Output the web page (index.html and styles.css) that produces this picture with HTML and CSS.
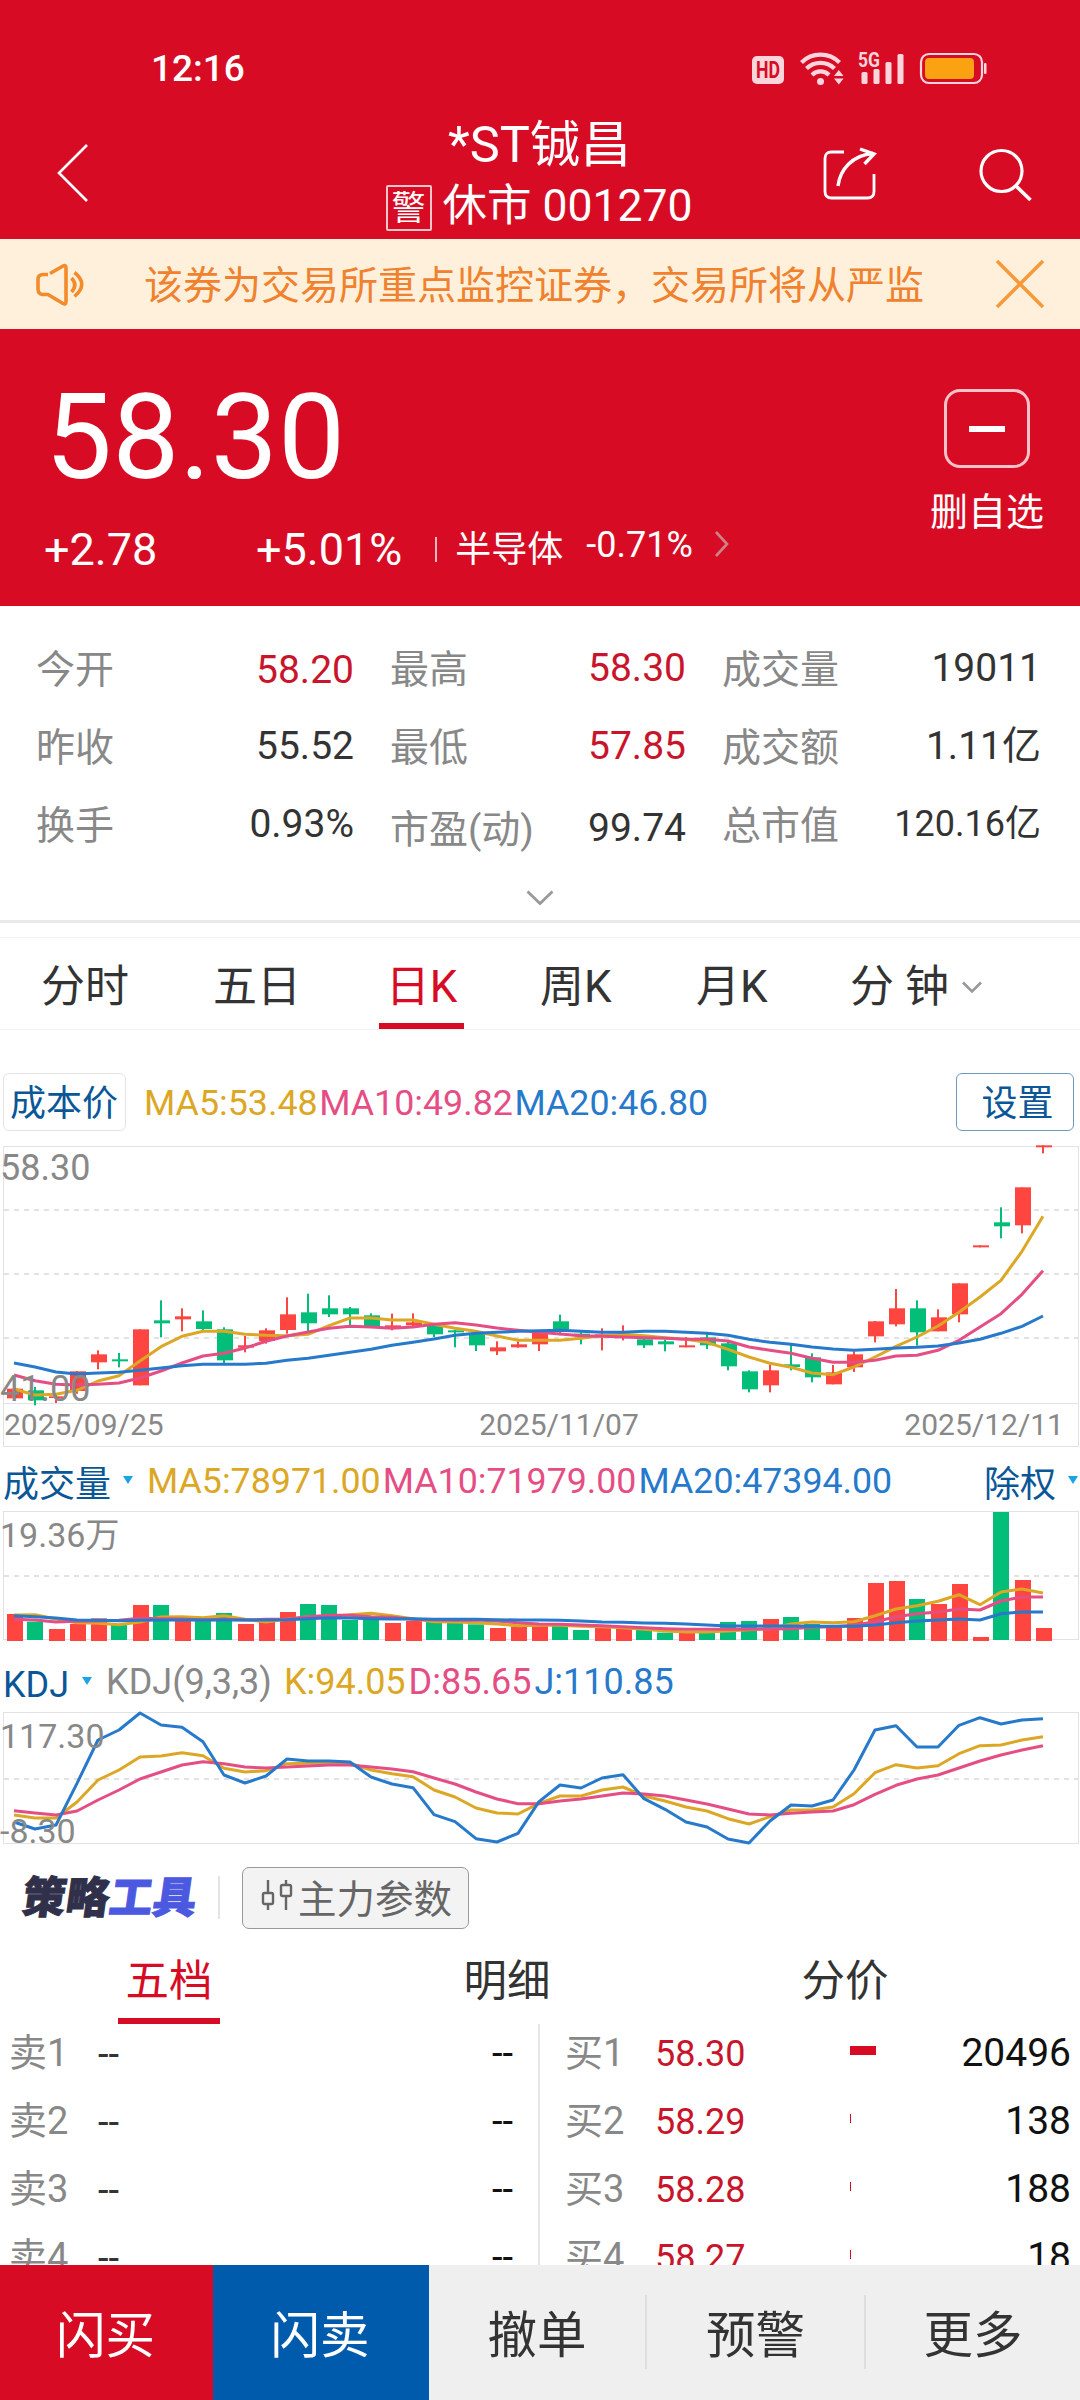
FILE: index.html
```html
<!DOCTYPE html>
<html lang="zh-CN">
<head>
    <meta charset="UTF-8">
    <meta name="viewport" content="width=device-width, initial-scale=1.0">
    <title>*ST铖昌 001270</title>
    <link rel="stylesheet" href="styles.css">
</head>
<body>

    <!-- Status bar and title -->
    <header class="header">
        <div class="status-bar">
            <span class="time">12:16</span>
            <svg class="status-icons" width="240" height="40" viewBox="0 0 240 40">
                <rect x="2" y="6" width="32" height="28" rx="5" fill="#fbd5dc"/>
                <text x="18" y="28" class="hd-text" text-anchor="middle" textLength="24" lengthAdjust="spacingAndGlyphs">HD</text>
                <g fill="none" stroke="#fbd5dc" stroke-width="4.2">
                    <path d="M51.500 12.500A27 27 0 0 1 89.500 12.500"/>
                    <path d="M56.500 18.500A20 20 0 0 1 84.500 18.500"/>
                    <path d="M62 25A12 12 0 0 1 79 25"/>
                </g>
                <circle cx="70.500" cy="31.500" r="3.500" fill="#fbd5dc"/>
                <path d="M84 26l4.800-6 4.800 6zM84 28.500h9.600l-4.800 6z" fill="#fbd5dc"/>
                <text x="108" y="17" class="net-text" textLength="22" lengthAdjust="spacingAndGlyphs">5G</text>
                <g fill="#fbd5dc">
                    <rect x="111.500" y="22" width="6" height="12" rx="1.500"/>
                    <rect x="123.500" y="19" width="6" height="15" rx="1.500"/>
                    <rect x="135.500" y="12" width="6" height="22" rx="1.500"/>
                    <rect x="147.500" y="4" width="6" height="30" rx="1.500"/>
                </g>
                <rect x="171" y="4" width="61" height="29" rx="8" fill="none" stroke="#fbd5dc" stroke-width="2.200"/>
                <rect x="175" y="8" width="49" height="21" rx="4" fill="#faa211"/>
                <rect x="234" y="13" width="2.500" height="11" rx="1" fill="#fbd5dc"/>
            </svg>
        </div>
        <div class="title-bar">
            <svg class="back-icon" width="34" height="60" viewBox="0 0 34 60">
                <path d="M31 2L3 30l28 28" fill="none" stroke="#fff" stroke-width="2.600"/>
            </svg>
            <div class="title">
                <h1>*ST铖昌</h1>
                <div class="subtitle"><span class="warn">警</span><span>休市 001270</span></div>
            </div>
            <svg class="share-icon" width="56" height="56" viewBox="0 0 56 56" fill="none" stroke="#fff" stroke-width="2.800">
                <path d="M22 6H9.500Q3 6 3 12.500V45.500Q3 52 9.500 52H45.500Q52 52 52 45.500V28"/>
                <path d="M16 40C18 24 30 9 51 7.500M38 3l14 5-9.500 10" stroke-width="3.400"/>
            </svg>
            <svg class="search-icon" width="56" height="56" viewBox="0 0 56 56" fill="none" stroke="#fff">
                <circle cx="23.500" cy="24" r="20.500" stroke-width="3.200"/>
                <path d="M37 38l15.500 15" stroke-width="3.600"/>
            </svg>
        </div>
    </header>

    <!-- Scrolling risk notice -->
    <div class="notice">
        <svg class="speaker-icon" width="50" height="44" viewBox="0 0 50 44" fill="none" stroke="#f38b2b" stroke-width="3.600">
            <path d="M13 12.500H8Q3 12.500 3 17.500V27Q3 32.500 8 32.500H13L28 41.500Q31 43 31 39.500V6Q31 2.500 28 4L15 11.500"/>
            <path d="M36.500 16Q43 22.500 36.500 30M39.500 10.500Q54 22 39.500 34.500"/>
        </svg>
        <p>该券为交易所重点监控证券，交易所将从严监</p>
        <svg class="close-icon" width="48" height="48" viewBox="0 0 48 48">
            <path d="M1 1l46 46M47 1L1 47" fill="none" stroke="#f7993a" stroke-width="3.600"/>
        </svg>
    </div>

    <!-- Current price -->
    <section class="quote">
        <div class="quote-left">
            <div class="price">58.30</div>
            <div class="changes">
                <span class="change">+2.78</span>
                <span class="change-rate">+5.01%</span>
                <i class="bar"></i>
                <span class="sector">半导体</span>
                <span class="sector-rate">-0.71%</span>
                <svg width="16" height="26" viewBox="0 0 16 26">
                    <path d="M2 1l11 12L2 25" fill="none" stroke="#c98587" stroke-width="2.600"/>
                </svg>
            </div>
        </div>
        <div class="favorite">
            <div class="minus-box"><i></i></div>
            <span>删自选</span>
        </div>
    </section>

    <!-- Daily figures -->
    <section class="stats">
        <div class="stat"><label>今开</label><b class="red low">58.20</b></div>
        <div class="stat"><label>最高</label><b class="red">58.30</b></div>
        <div class="stat"><label>成交量</label><b>19011</b></div>
        <div class="stat"><label>昨收</label><b>55.52</b></div>
        <div class="stat"><label>最低</label><b class="red">57.85</b></div>
        <div class="stat"><label>成交额</label><b>1.11亿</b></div>
        <div class="stat"><label>换手</label><b>0.93%</b></div>
        <div class="stat shifted"><label>市盈(动)</label><b>99.74</b></div>
        <div class="stat"><label>总市值</label><b class="small">120.16亿</b></div>
    </section>
    <div class="expand">
        <svg width="28" height="16" viewBox="0 0 28 16">
            <path d="M1.500 1.500L14 13.500 26.500 1.500" fill="none" stroke="#999" stroke-width="2.800"/>
        </svg>
    </div>

    <!-- Chart period tabs -->
    <nav class="period-tabs">
        <span class="t1">分时</span>
        <span class="t2">五日</span>
        <span class="t3 active">日K</span>
        <span class="t4">周K</span>
        <span class="t5">月K</span>
        <span class="t6">分 钟
            <svg width="20" height="13" viewBox="0 0 20 13">
                <path d="M1 1.500L10 10.500 19 1.500" fill="none" stroke="#999" stroke-width="2.600"/>
            </svg>
        </span>
    </nav>

    <!-- K line -->
    <div class="legend price-legend">
        <span class="cost-btn">成本价</span>
        <span class="values"><span class="ma5">MA5:53.48</span><span class="ma10">MA10:49.82</span><span class="ma20">MA20:46.80</span></span>
        <span class="set-btn">设置</span>
    </div>
    <div class="chart kline">
        <svg id="kline" width="1080" height="258"></svg>
        <span class="axis top">58.30</span>
        <span class="axis bottom">41.00</span>
    </div>
    <div class="dates"><span>2025/09/25</span><span class="middle">2025/11/07</span><span>2025/12/11</span></div>

    <!-- Volume -->
    <div class="legend volume-legend">
        <span class="name">成交量</span><i class="arrow"></i>
        <span class="values"><span class="ma5">MA5:78971.00</span><span class="ma10">MA10:71979.00</span><span class="ma20">MA20:47394.00</span></span>
        <span class="name right">除权</span><i class="arrow"></i>
    </div>
    <div class="chart volume">
        <svg id="volume" width="1080" height="130"></svg>
        <span class="axis top">19.36万</span>
    </div>

    <!-- KDJ -->
    <div class="legend kdj-legend">
        <span class="name">KDJ</span><i class="arrow"></i>
        <span class="params">KDJ(9,3,3)</span>
        <span class="values"><span class="ma5">K:94.05</span><span class="ma10">D:85.65</span><span class="ma20">J:110.85</span></span>
    </div>
    <div class="chart kdj">
        <svg id="kdj" width="1080" height="133"></svg>
        <span class="axis top">117.30</span>
        <span class="axis bottom">-8.30</span>
    </div>

    <!-- Strategy tools -->
    <div class="tools">
        <div class="logo">策略<em>工具</em></div>
        <i class="divider"></i>
        <div class="tool-btn">
            <svg width="32" height="32" viewBox="0 0 32 32" fill="none" stroke="#666" stroke-width="2.400">
                <path d="M7 1v13M7 25v6M25 1v5M25 17v14"/>
                <rect x="2" y="14" width="10" height="11" rx="1.500"/>
                <rect x="20" y="6" width="10" height="11" rx="1.500"/>
            </svg>
            <span>主力参数</span>
        </div>
    </div>

    <!-- Order book -->
    <nav class="book-tabs">
        <span class="active">五档</span>
        <span>明细</span>
        <span>分价</span>
    </nav>
    <section class="book">
        <ul class="sell">
            <li><label>卖1</label><span>--</span><b>--</b></li>
            <li><label>卖2</label><span>--</span><b>--</b></li>
            <li><label>卖3</label><span>--</span><b>--</b></li>
            <li><label>卖4</label><span>--</span><b>--</b></li>
        </ul>
        <ul class="buy">
            <li><label>买1</label><span>58.30</span><i style="width: 26px"></i><b>20496</b></li>
            <li><label>买2</label><span>58.29</span><i style="width: 1px"></i><b>138</b></li>
            <li><label>买3</label><span>58.28</span><i style="width: 1px"></i><b>188</b></li>
            <li><label>买4</label><span>58.27</span><i style="width: 1px"></i><b>18</b></li>
        </ul>
    </section>

    <footer class="actions">
        <span class="buy-btn">闪买</span>
        <span class="sell-btn">闪卖</span>
        <span>撤单</span>
        <span>预警</span>
        <span>更多</span>
    </footer>

    <script src="charts.js"></script>
</body>
</html>
```

FILE: styles.css
```css
/* General */
* {
    box-sizing: border-box;
}

body {
    margin: 0;
    width: 1080px;
    height: 2400px;
    overflow: hidden;
    background: #fff;
    color: #333;
    font-family: Roboto, "Noto Sans CJK SC", sans-serif;
    line-height: 1;
    white-space: nowrap;
}

h1, p, ul {
    margin: 0;
    padding: 0;
    font-weight: 400;
    list-style: none;
}

b, i, em {
    font-weight: 400;
    font-style: normal;
}

svg {
    display: block;
    flex: none;
}

/* Header */
.header {
    height: 239px;
    background: #d70c24;
    color: #fff;
}

.status-bar {
    display: flex;
    justify-content: space-between;
    height: 110px;
    padding: 50px 90px 0 151px;
}

.time {
    font-size: 37px;
    font-weight: 500;
    line-height: 38px;
}

.hd-text {
    font-size: 23px;
    font-weight: 700;
    fill: #d70c24;
}

.net-text {
    font-size: 20px;
    font-weight: 700;
    fill: #fbd5dc;
}

.title-bar {
    display: grid;
    grid-template-columns: 34px 1fr 56px 56px;
    height: 129px;
    padding: 0 48px 0 56px;
}

.back-icon {
    margin-top: 33px;
}

.title {
    justify-self: center;
    width: 310px;
    margin-left: 71px;
    text-align: center;
}

.title h1 {
    padding-right: 2px;
    font-size: 50.500px;
    line-height: 69px;
}

.subtitle {
    display: flex;
    gap: 11px;
    font-size: 44.500px;
    line-height: 54px;
}

.warn {
    width: 46px;
    height: 46px;
    margin-top: 6px;
    border: 2px solid #f7c5cb;
    border-radius: 2px;
    font-size: 34px;
    line-height: 43px;
}

.share-icon {
    margin: 36px 0 0 -98px;
}

.search-icon {
    margin: 37px 0 0 2px;
}

/* Notice */
.notice {
    display: flex;
    align-items: center;
    height: 90px;
    padding: 0 36px 0 35px;
    background: #fef0da;
    color: #f0812e;
    font-size: 39px;
}

.notice p {
    margin: 4px auto 0 59px;
}

/* Quote */
.quote {
    display: flex;
    justify-content: space-between;
    height: 277px;
    background: #d70c24;
    color: #fff;
}

.price {
    height: 180px;
    padding: 38px 0 0 45px;
    font-size: 119.500px;
    line-height: 141px;
}

.changes {
    display: flex;
    align-items: center;
    height: 80px;
    padding-left: 44px;
    font-size: 45px;
}

.change {
    width: 212px;
}

.changes .bar {
    width: 2px;
    height: 25px;
    margin-left: 33px;
    background: #f3b9c0;
}

.sector {
    margin-left: 18px;
    padding-top: 2px;
    font-size: 36px;
}

.sector-rate {
    margin: -8px 21px 0 23px;
    font-size: 36px;
}

.changes svg {
    margin-top: -10px;
}

.favorite {
    display: flex;
    flex-direction: column;
    align-items: center;
    width: 114px;
    margin-right: 36px;
    padding-top: 60px;
    font-size: 38px;
}

.favorite span {
    margin-top: 25px;
}

.minus-box {
    display: flex;
    align-items: center;
    justify-content: center;
    width: 86px;
    height: 79px;
    border: 3px solid #f8c2c9;
    border-radius: 16px;
}

.minus-box i {
    width: 36px;
    height: 6px;
    background: #fff;
}

/* Stats */
.stats {
    display: grid;
    grid-template-columns: 318px 296px 319px;
    grid-auto-rows: 78px;
    column-gap: 36px;
    height: 270px;
    padding: 24px 0 0 36px;
    font-size: 39px;
}

.stat {
    display: flex;
    justify-content: space-between;
    line-height: 77px;
}

.stat label {
    color: #888;
    padding-top: 2px;
}

.red {
    color: #c8152b;
}

.stat .low {
    padding-top: 2px;
}

.stat .small {
    font-size: 36px;
}

.shifted {
    padding-top: 4px;
}

.expand {
    height: 62px;
    padding: 14px 0 0 526px;
    border-bottom: 1px solid #f2f2f2;
    background: linear-gradient(#e8e9eb, #e8e9eb) 0 44px / 100% 3px no-repeat;
}

/* Period tabs */
.period-tabs {
    display: grid;
    grid-template-columns: 172px 166px 161px 156px 154px 1fr;
    height: 92px;
    padding-left: 41px;
    border-bottom: 1px solid #f2f2f2;
    font-size: 44px;
    line-height: 98px;
}

.period-tabs .active {
    width: 85px;
    height: 91px;
    border-bottom: 6px solid #d70c24;
    color: #d70c24;
    text-align: center;
}

.period-tabs .t6 {
    display: flex;
    align-items: center;
    gap: 13px;
}

/* Legends */
.legend {
    display: flex;
    font-size: 36px;
    line-height: 36px;
}

.values {
    display: flex;
    gap: 2px;
}

.ma5 {
    color: #dca725;
}

.ma10 {
    color: #e54e84;
}

.ma20 {
    color: #2679cb;
}

.name {
    color: #0b5697;
}

.arrow {
    width: 0;
    height: 0;
    border: 5px solid transparent;
    border-top: 8px solid #19a4e8;
    border-bottom: 0;
}

.price-legend {
    height: 116px;
    padding: 43px 6px 0 3px;
    line-height: 60px;
}

.price-legend .values {
    gap: 1.500px;
    font-size: 35.800px;
}

.cost-btn,
.set-btn {
    height: 58px;
    border: 1px solid #e4e4e4;
    border-radius: 6px;
    color: #0b5697;
    text-align: center;
    line-height: 61px;
}

.cost-btn {
    width: 123px;
    margin-right: 18px;
    padding-right: 1px;
}

.set-btn {
    width: 118px;
    margin-left: auto;
    padding-left: 5px;
    border-color: #6f99bd;
}

/* Charts */
.chart {
    position: relative;
}

.chart svg {
    overflow: visible;
}

.axis {
    position: absolute;
    left: 0;
    color: #888;
    font-size: 34px;
}

.kline {
    height: 258px;
}

.kline .axis {
    font-size: 36px;
}

.kline .top {
    top: 4px;
}

.kline .bottom {
    top: 225px;
}

.dates {
    display: flex;
    justify-content: space-between;
    width: 1076px;
    height: 43px;
    margin-left: 3px;
    padding: 0 14px 0 0;
    border: 1px solid #e2e2e2;
    border-top: 0;
    color: #888;
    font-size: 30px;
    line-height: 42px;
}

.dates .middle {
    margin-left: 50px;
}

.volume-legend {
    height: 64px;
    padding: 16px 2px 0 3px;
}

.volume-legend .values {
    gap: 2px;
    font-size: 35.750px;
}

.volume-legend .name {
    padding-top: 4px;
}

.volume-legend .arrow {
    margin: 13px 0 0 12px;
}

.volume-legend .values {
    margin-left: 14px;
}

.name.right {
    margin-left: auto;
}

.volume {
    height: 130px;
}

.volume .top {
    top: 7px;
}

.kdj-legend {
    height: 71px;
    padding: 22px 0 0 3px;
}

.kdj-legend .name {
    padding-top: 4px;
}

.kdj-legend .arrow {
    margin: 14px 0 0 13px;
}

.params {
    margin-left: 14px;
    color: #888;
}

.kdj-legend .params,
.kdj-legend .values {
    padding-top: 1px;
}

.kdj-legend .values {
    gap: 3px;
    margin-left: 12px;
}

.kdj {
    height: 133px;
}

.kdj .top {
    top: 7px;
}

.kdj .bottom {
    top: 102px;
}

/* Strategy tools */
.tools {
    display: flex;
    height: 91px;
    padding: 22px 0 0 22px;
}

.logo {
    width: 196px;
    padding-top: 10px;
    color: #30304a;
    font-size: 43.500px;
    font-weight: 900;
    transform: skewX(-8deg);
    -webkit-text-stroke: 1px currentColor;
}

.logo em {
    color: #4b59e0;
    font-weight: 900;
}

.divider {
    width: 2px;
    height: 43px;
    margin: 9px 22px 0 0;
    background: #e4e4e4;
}

.tool-btn {
    display: flex;
    align-items: center;
    gap: 5px;
    width: 227px;
    height: 62px;
    padding: 4px 0 0 18px;
    border: 1.500px solid #999;
    border-radius: 7px;
    background: #f3f3f3;
    color: #666;
    font-size: 38.500px;
}

.tool-btn svg {
    margin-top: -11px;
}

/* Order book */
.book-tabs {
    display: flex;
    height: 88px;
    padding-left: 118px;
    font-size: 43.500px;
    line-height: 92px;
}

.book-tabs span {
    flex: none;
    width: 102px;
    height: 88px;
    margin-right: 236px;
    text-align: center;
}

.book-tabs .active {
    border-bottom: 6px solid #d70c24;
    color: #d70c24;
}

.book {
    display: flex;
    height: 241px;
    overflow: hidden;
    font-size: 38px;
    line-height: 58px;
}

.book li {
    display: flex;
    height: 68px;
}

.book label {
    color: #888;
}

.book b {
    margin-left: auto;
    color: #111;
}

.sell {
    width: 540px;
    padding: 0 25px 0 9px;
    border-right: 2px solid #e6e6e6;
}

.sell label {
    width: 89px;
}

.sell span {
    padding-top: 1px;
}

.buy {
    width: 540px;
    padding: 0 9px 0 25px;
}

.buy label {
    width: 90px;
}

.buy span {
    width: 195px;
    padding-top: 1px;
    color: #c8152b;
    font-size: 36px;
}

.buy i {
    height: 9px;
    margin-top: 22px;
    background: #d70c24;
}

.buy b {
    font-size: 39px;
}

/* Bottom actions */
.actions {
    display: grid;
    grid-template-columns: 213px 216px 218px 219px 214px;
    height: 135px;
    background: #efefef;
    font-size: 49.500px;
    line-height: 142px;
    text-align: center;
}

.actions span {
    padding-right: 2px;
}

.actions span:last-child {
    padding-right: 0;
}

.actions span + span + span:not(:last-child) {
    background: linear-gradient(#dedede, #dedede) right 30px / 2px 74px no-repeat;
}

.actions .buy-btn {
    background: #d70c24;
    color: #fff;
}

.actions .sell-btn {
    background: #005bac;
    color: #fff;
}
```

FILE: charts.js
```javascript
const SVG_NS = 'http://www.w3.org/2000/svg';
const RED = '#ff4540';
const GREEN = '#02be79';
const COLORS = ['#dca725', '#e54e84', '#2679cb'];
const STEP = 21;

// All heights below are stored in thirds of a pixel, measured down from the top of each chart
const scale = v => v / 3;
const x = i => 14 + i * STEP;

function add(svg, name, attrs) {
    const el = document.createElementNS(SVG_NS, name);
    for (const key in attrs) el.setAttribute(key, attrs[key]);
    svg.appendChild(el);
}

function frame(svg, height, guides) {
    add(svg, 'rect', { x: 3.5, y: 0.5, width: 1075, height: height, fill: 'none', stroke: '#e2e2e2' });
    guides.forEach(y => add(svg, 'path', {
        d: `M4 ${y}H1078`, stroke: '#e2e2e2', 'stroke-width': 2, 'stroke-dasharray': '5 5'
    }));
}

function lines(svg, series, base) {
    series.forEach((values, n) => add(svg, 'polyline', {
        points: values.map((v, i) => `${x(i)},${scale(v - base).toFixed(1)}`).join(' '),
        fill: 'none', stroke: COLORS[n], 'stroke-width': 3, 'stroke-linejoin': 'round'
    }));
}

// Candles: color, high, body top, body bottom, low
const candles = [
    ['r',1013,1015,1044,1046], ['g',1010,1020,1050,1065], ['r',1030,1038,1043,1058], ['r',962,963,1022,1030],
    ['r',900,912,936,957], ['g',908,927,933,951], ['r',837,837,1005,1005], ['g',750,810,819,861],
    ['r',774,798,807,843], ['g',780,813,836,840], ['g',831,837,930,940], ['r',857,885,892,906],
    ['r',834,840,872,880], ['r',741,792,839,850], ['g',730,786,819,845], ['g',735,774,792,800],
    ['g',770,774,792,828], ['g',789,795,828,831], ['r',790,825,834,840], ['r',789,816,825,832],
    ['g',820,825,852,860], ['g',838,840,846,891], ['g',845,849,885,902], ['r',873,891,903,914],
    ['r',873,882,891,892], ['r',840,843,882,902], ['g',793,813,840,855], ['g',840,850,858,882],
    ['r',834,852,858,900], ['r',825,852,858,870], ['g',860,867,885,893], ['g',868,873,882,903],
    ['r',860,885,891,891], ['g',848,861,885,896], ['g',870,879,948,960], ['g',960,963,1017,1026],
    ['r',942,960,1005,1026], ['g',884,942,950,960], ['g',909,921,981,996], ['r',944,966,1002,1002],
    ['r',903,912,951,965], ['r',812,813,858,876], ['r',716,774,822,828], ['g',750,774,846,886],
    ['r',777,801,843,843], ['r',699,699,792,816], ['r',585,585,591,591], ['g',471,516,528,564],
    ['r',411,411,525,549], ['r',285,285,291,309]
];

const priceMa = [
    [1016,1034,1032,1020,992,976,932,889,858,843,843,852,855,856,852,826,803,803,809,809,822,834,843,857,870,
     870,870,864,856,852,856,862,867,876,897,920,939,951,968,973,950,920,888,860,827,786,740,690,603,498],
    [974,991,1002,1004,1002,998,983,962,938,917,909,893,873,857,845,834,828,830,834,830,822,817,824,833,840,
     846,851,856,858,860,862,864,867,867,872,890,900,909,924,936,936,930,917,915,900,870,830,790,732,661],
    [938,950,965,971,968,966,960,953,946,942,942,942,939,930,924,915,906,897,885,876,866,855,849,846,843,
     841,840,843,846,846,843,843,846,849,855,867,876,882,890,896,900,897,893,891,887,878,867,849,828,797]
];

const kline = document.getElementById('kline');
frame(kline, 257, [64, 128, 192]);
candles.forEach(([c, high, top, bottom, low], i) => {
    const fill = c === 'r' ? RED : GREEN;
    const left = x(i) - (c === 'r' ? 7 : 8) + (i > 0 && c === 'g' ? 1 : 0);
    add(kline, 'rect', { x: x(i) - 1, y: scale(high - 287), width: 2, height: scale(low - high), fill });
    add(kline, 'rect', { x: left, y: scale(top - 287), width: 16, height: scale(bottom - top), fill });
});
lines(kline, priceMa, 287);

// Volume bars share the candle colors
const volumes = [
    522,545,567,552,535,555,495,495,542,540,519,552,546,516,492,495,540,540,549,543,546,549,553,564,560,
    557,553,570,563,563,569,578,578,575,546,543,537,531,552,561,534,429,423,477,492,432,591,216,420,564
];

const volumeMa = [
    [525,524,537,548,550,554,546,531,530,533,527,538,546,538,530,530,524,520,527,536,545,546,548,552,557,
     556,556,559,560,563,568,573,576,576,573,569,566,552,546,548,545,527,507,497,484,464,494,456,447,459],
    [538,540,546,544,543,541,535,536,537,540,538,540,538,538,530,526,526,530,532,538,540,541,540,543,548,
     552,553,555,557,560,563,566,568,568,568,568,567,566,562,560,556,545,530,521,516,507,510,483,471,471],
    [527,530,534,540,541,542,541,540,540,540,540,540,540,539,536,533,534,536,537,536,538,538,538,539,540,
     540,541,543,546,547,549,550,552,555,558,558,558,558,559,559,559,555,548,543,540,537,540,521,516,516]
];

const volume = document.getElementById('volume');
frame(volume, 128, [65]);
volumes.forEach((top, i) => {
    const red = candles[i][0] === 'r';
    add(volume, 'rect', {
        x: x(i) - (red ? 7 : 8), y: scale(top - 213), width: 16,
        height: scale((red ? 603 : 600) - top), fill: red ? RED : GREEN
    });
});
lines(volume, volumeMa, 213);

const kdjLines = [
    [1125,1134,1134,1086,1020,990,951,948,938,947,985,996,992,971,970,970,970,990,1001,1010,1050,1071,1104,1119,1122,
     1090,1068,1068,1050,1041,1068,1083,1101,1113,1136,1152,1130,1110,1110,1101,1061,998,974,984,977,941,917,915,900,890],
    [1112,1119,1125,1113,1080,1050,1017,996,975,965,971,981,984,981,978,975,975,981,987,995,1014,1032,1056,1077,1091,
     1091,1083,1077,1068,1059,1062,1068,1080,1092,1107,1122,1125,1120,1116,1113,1094,1063,1036,1017,1005,984,963,945,930,917],
    [1146,1167,1155,1030,900,870,819,855,862,905,1005,1029,1008,957,963,963,966,1011,1032,1043,1124,1145,1196,1206,1180,
     1085,1035,1044,1014,1004,1076,1108,1146,1161,1197,1209,1143,1095,1098,1080,990,870,857,921,921,856,833,852,840,836]
];

const kdj = document.getElementById('kdj');
frame(kdj, 131, [67]);
lines(kdj, kdjLines, 816);
```
